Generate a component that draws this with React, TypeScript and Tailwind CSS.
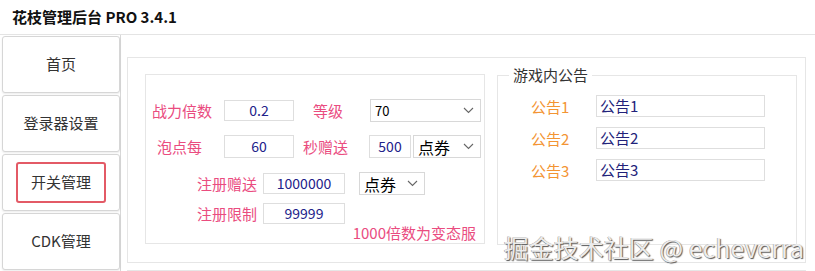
import React from "react";

const tabs = ["首页", "登录器设置", "开关管理", "CDK管理"];

const Chevron = () => (
  <svg width="11" height="7" viewBox="0 0 11 7" className="shrink-0">
    <path d="M1 1l4.5 4.5L10 1" stroke="#666" strokeWidth="1.1" fill="none" />
  </svg>
);

const Input = ({ value, w }: { value: string; w: string }) => (
  <div
    className={`${w} h-[21px] border border-[#dedede] bg-white flex items-center justify-center text-[14px] text-[#22228a]`}
  >
    {value}
  </div>
);

const Select = ({ value, w, big }: { value: string; w: string; big?: boolean }) => (
  <div
    className={`${w} h-[23px] border border-[#d8d8d8] bg-white flex items-center justify-between pl-[4px] pr-[6px] ${
      big ? "text-[16px]" : "text-[13px]"
    } text-black`}
  >
    <span>{value}</span>
    <Chevron />
  </div>
);

const Label = ({ text, className }: { text: string; className: string }) => (
  <span className={`text-[15px] text-[#ea4c7f] leading-none ${className}`}>{text}</span>
);

export default function App() {
  return (
    <div className="w-[815px] h-[271px] bg-white overflow-hidden relative font-['Noto_Sans_CJK_SC','Noto_Sans',sans-serif]">
      <div className="h-[34px] pl-[12px] pt-[1px] flex items-center text-[15px] font-bold text-[#111]">
        花枝管理后台 PRO 3.4.1
      </div>

      <div className="flex border-t border-[#e4e4e4] h-[237px]">
        <div className="w-[121px] flex flex-col gap-[2px] pt-px pl-[2px] border-r border-[#d8d8d8]">
          {tabs.map((t, i) => (
            <div
              key={t}
              className="h-[57px] shrink-0 bg-white border border-[#d6d6d6] rounded-[3px] flex items-center justify-center text-[15px] text-[#333] shadow-[0_1px_2px_rgba(0,0,0,0.08)]"
            >
              {i === 2 ? (
                <span className="w-[90px] h-[41px] border-2 border-[#e35a66] rounded-[3px] flex items-center justify-center">
                  {t}
                </span>
              ) : (
                t
              )}
            </div>
          ))}
        </div>

        <div className="flex-1 pl-[6px] pt-[22px] pr-[9px] flex flex-col">
          <div className="h-[207px] border border-[#e6e6e6] pl-[17px] pt-[16px] flex items-start gap-[12px]">
            {/* 参数设置 */}
            <div className="w-[340px] h-[170px] border border-[#e6e6e6] flex flex-col pt-[24px]">
              <div className="h-[23px] flex items-center pl-[6px]">
                <Label text="战力倍数" className="w-[72px]" />
                <Input value="0.2" w="w-[70px]" />
                <Label text="等级" className="w-[76px] pl-[19px]" />
                <Select value="70" w="w-[111px]" />
              </div>
              <div className="h-[23px] flex items-center pl-[11px] mt-[13px]">
                <Label text="泡点每" className="w-[67px]" />
                <Input value="60" w="w-[70px] h-[23px]" />
                <Label text="秒赠送" className="w-[75px] pl-[9px]" />
                <Input value="500" w="w-[42px] h-[23px]" />
                <div className="w-[2px]" />
                <Select value="点券" w="w-[68px]" big />
              </div>
              <div className="h-[23px] flex items-center pl-[51px] mt-[14px]">
                <Label text="注册赠送" className="w-[66px]" />
                <Input value="1000000" w="w-[82px] h-[20px]" />
                <div className="w-[14px]" />
                <Select value="点券" w="w-[66px]" big />
              </div>
              <div className="h-[23px] flex items-center pl-[51px] mt-[7px]">
                <Label text="注册限制" className="w-[66px]" />
                <Input value="99999" w="w-[82px]" />
              </div>
              <div className="flex justify-end pr-[8px] -mt-[2px]">
                <span className="text-[15px] text-[#ea4c7f] leading-[20px]">1000倍数为变态服</span>
              </div>
            </div>

            {/* 游戏内公告 */}
            <div className="w-[300px] h-[170px] mt-px border border-[#e6e6e6] relative flex flex-col pt-[19px] gap-[10px]">
              <span className="absolute -top-[9px] left-[11px] bg-white px-[4px] text-[15px] leading-[16px] text-[#333]">
                游戏内公告
              </span>
              {[1, 2, 3].map((n) => (
                <div key={n} className="h-[22px] flex items-center pl-[33px]">
                  <span className="w-[65px] text-[15px] text-[#f39433] leading-none">公告{n}</span>
                  <div className="w-[169px] h-[22px] border border-[#dedede] bg-white flex items-center pl-[3px] text-[15px] text-[#22227a]">
                    公告{n}
                  </div>
                </div>
              ))}
            </div>
          </div>
          <div className="mt-[7px] border-t border-[#e6e6e6]" />
        </div>
      </div>

      <div className="absolute right-[11px] bottom-[11px] text-[25px] leading-none text-[#ececec] [text-shadow:1px_1px_1px_#555,-0.5px_-0.5px_0_#999]">
        掘金技术社区 @ echeverra
      </div>
    </div>
  );
}
